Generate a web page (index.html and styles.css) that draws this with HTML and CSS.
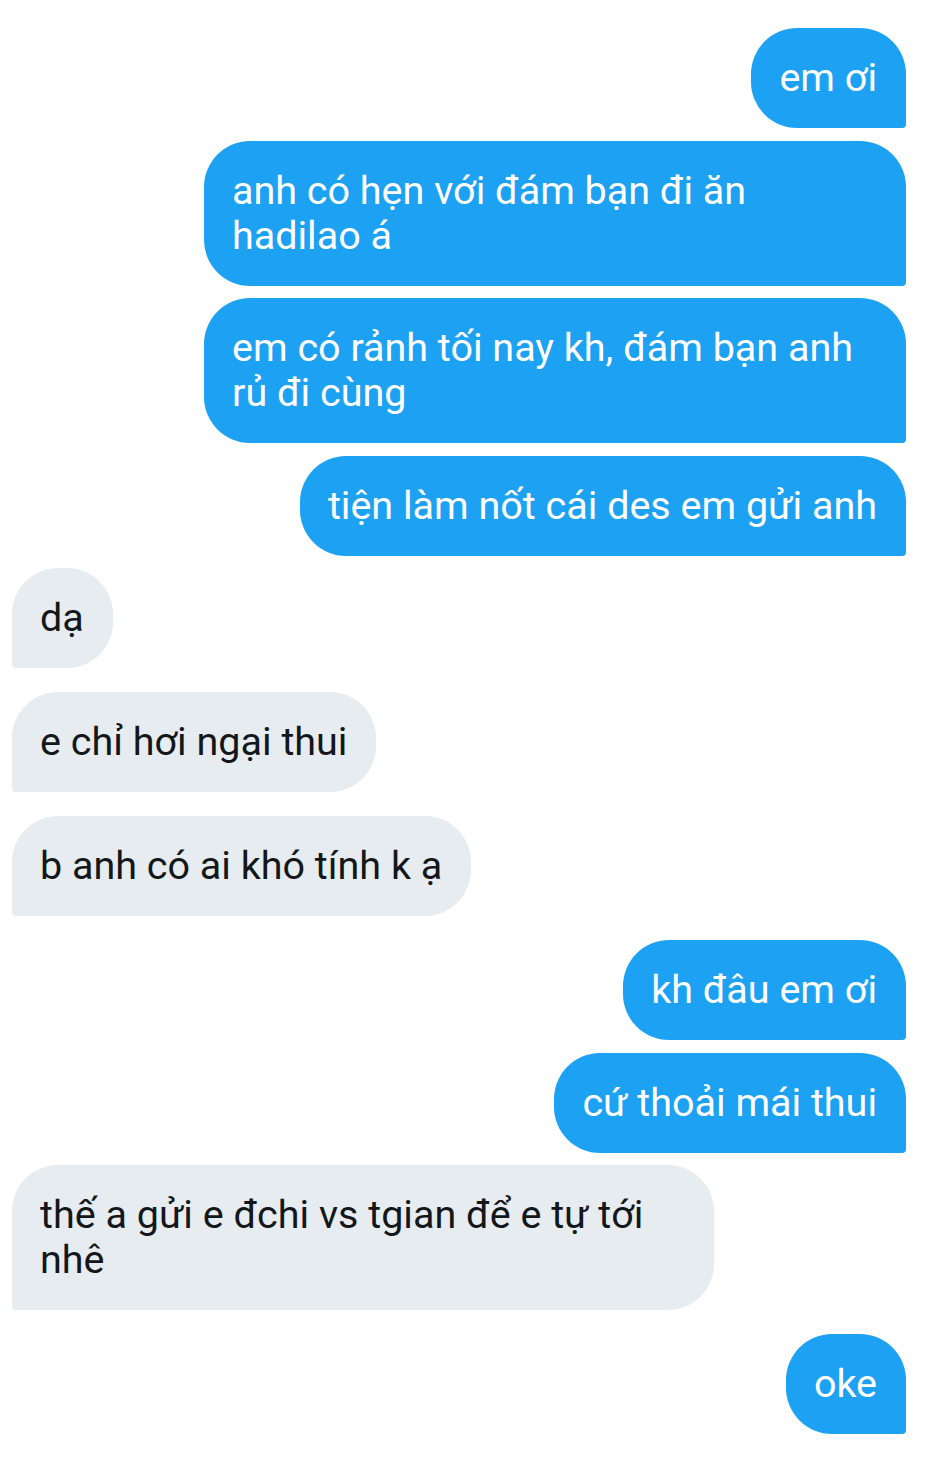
FILE: index.html
```html
<!DOCTYPE html>
<html lang="vi">
<head>
<meta charset="utf-8">
<link rel="stylesheet" href="styles.css">
</head>
<body>
<div class="chat">
  <div class="msg out g0"><div class="bubble">em ơi</div></div>
  <div class="msg out g1"><div class="bubble">anh có hẹn với đám bạn đi ăn hadilao á</div></div>
  <div class="msg out g1"><div class="bubble">em có rảnh tối nay kh, đám bạn anh rủ đi cùng</div></div>
  <div class="msg out g1"><div class="bubble">tiện làm nốt cái des em gửi anh</div></div>
  <div class="msg in g1"><div class="bubble">dạ</div></div>
  <div class="msg in g2"><div class="bubble">e chỉ hơi ngại thui</div></div>
  <div class="msg in g2"><div class="bubble">b anh có ai khó tính k ạ</div></div>
  <div class="msg out g2"><div class="bubble">kh đâu em ơi</div></div>
  <div class="msg out g1"><div class="bubble">cứ thoải mái thui</div></div>
  <div class="msg in g1"><div class="bubble">thế a gửi e đchi vs tgian để e tự tới nhê</div></div>
  <div class="msg out g2"><div class="bubble">oke</div></div>
</div>
</body>
</html>
```

FILE: styles.css
```css
html, body {
  margin: 0;
  padding: 0;
  background: #ffffff;
}
body {
  font-family: Roboto, "Noto Sans", sans-serif;
}
.chat {
  display: flex;
  flex-direction: column;
  padding: 28px 34px 30px 12px;
}
.msg {
  display: flex;
}
.msg.out { justify-content: flex-end; }
.msg.in { justify-content: flex-start; }
.g1 { margin-top: 12.5px; }
.g2 { margin-top: 24px; }
.bubble {
  max-width: 645px;
  padding: 27px 29px 28px 28px;
  font-size: 39.5px;
  line-height: 45px;
  border-radius: 46px;
}
.out .bubble {
  background: #1da1f2;
  color: #ffffff;
  border-bottom-right-radius: 4px;
}
.in .bubble {
  background: #e6ecf0;
  color: #14171a;
  border-bottom-left-radius: 4px;
}
```
